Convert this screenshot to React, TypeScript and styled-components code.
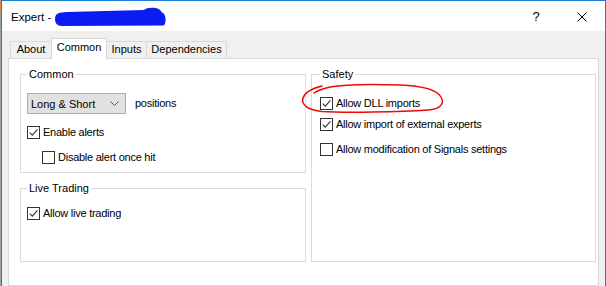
import styled, { createGlobalStyle } from "styled-components";

const tabs = [
  { label: "About", width: 41 },
  { label: "Common", width: 56 },
  { label: "Inputs", width: 40 },
  { label: "Dependencies", width: 80 },
];

const safety = [
  { label: "Allow DLL imports", checked: true, gap: 16 },
  { label: "Allow import of external experts", checked: true, gap: 8 },
  { label: "Allow modification of Signals settings", checked: false, gap: 12 },
];

const GlobalStyle = createGlobalStyle`
  html, body {
    margin: 0;
    padding: 0;
  }
  body {
    background: #d4d4d4;
    font-family: "Liberation Sans", Arial, sans-serif;
    font-size: 11px;
    color: #000;
    overflow: hidden;
  }
`;

function Check(props: { checked: boolean }) {
  return (
    <Box>
      {props.checked && (
        <svg width="11" height="11" viewBox="0 0 11 11">
          <path d="M1.8 5.6 L4.3 8.2 L9.4 2.4" fill="none" stroke="#333" strokeWidth="1.1" />
        </svg>
      )}
    </Box>
  );
}

function CheckItem(props: { label: string; checked: boolean; gap?: number; indent?: number }) {
  return (
    <CheckRow gap={props.gap || 0} indent={props.indent || 0}>
      <Check checked={props.checked} />
      <Label>{props.label}</Label>
    </CheckRow>
  );
}

export default function App() {
  return (
    <Screen>
      <GlobalStyle />
      <Window>
        <TitleBar>
          <Title>Expert -</Title>
          <Scribble width="112" height="20" viewBox="0 0 112 20">
            <path
              d="M0 12 C0 6 4 5.5 12 5 L89 3 C91 1 96 0.2 101 1 C105 2 106 4 107 5.5 C111.5 6.5 111.5 17.5 108.5 18.5 L7 19 C2 19 0 16 0 12 Z"
              fill="#0a1cf2"
            />
          </Scribble>
          <CaptionButton>?</CaptionButton>
          <CloseButton>
            <svg width="10" height="10" viewBox="0 0 10 10">
              <path d="M0.5 0.5 L9.5 9.5 M9.5 0.5 L0.5 9.5" stroke="#000" strokeWidth="1" />
            </svg>
          </CloseButton>
        </TitleBar>
        <Body>
          <TabStrip>
            {tabs.map((tab, index) => (
              <Tab key={index} active={index === 1} first={index === 0} w={tab.width}>
                {tab.label}
              </Tab>
            ))}
          </TabStrip>
          <Panel>
            <Column>
              <Group h={105}>
                <Legend>Common</Legend>
                <SelectRow>
                  <Select>
                    Long &amp; Short
                    <svg width="9" height="5" viewBox="0 0 9 5">
                      <path d="M0.5 0.5 L4.5 4.5 L8.5 0.5" fill="none" stroke="#555" strokeWidth="1" />
                    </svg>
                  </Select>
                  <Label>positions</Label>
                </SelectRow>
                <CheckItem label="Enable alerts" checked={true} gap={12} />
                <CheckItem label="Disable alert once hit" checked={false} gap={12} indent={15} />
              </Group>
              <Group h={80}>
                <Legend>Live Trading</Legend>
                <CheckItem label="Allow live trading" checked={true} gap={12} />
              </Group>
            </Column>
            <Group h={194} pad={8}>
              <Legend>Safety</Legend>
              {safety.map((item, index) => (
                <CheckItem key={index} label={item.label} checked={item.checked} gap={item.gap} />
              ))}
            </Group>
          </Panel>
        </Body>
      </Window>
      <Marker width="146" height="34" viewBox="0 0 146 34">
        <path
          d="M22 4 C14 6 5 10 3 16 C1 23 8 28 22 29.5 C45 31 100 30 128 28 C140 27 145 22 141 15 C137 8 125 4 100 3 C70 2 40 3 28 5.5 C22 7 17 9 14 11"
          fill="none"
          stroke="#ee0a0a"
          strokeWidth="1.5"
          strokeLinecap="round"
        />
      </Marker>
    </Screen>
  );
}

const Screen = styled.div`
  position: relative;
  width: 606px;
  height: 286px;
  padding-left: 1px;
  box-sizing: border-box;
  display: flex;
  overflow: hidden;
  background: linear-gradient(#e3844c 0 11px, #9aa1aa 11px);
`;

const Window = styled.div`
  flex: 1;
  display: flex;
  flex-direction: column;
  border: 1px solid #1a7fd4;
  border-bottom: none;
  background: #f0f0f0;
`;

const TitleBar = styled.div`
  height: 30px;
  display: flex;
  align-items: center;
  padding-left: 9px;
  background: #fff;
`;

const Title = styled.span`
  font-size: 11.5px;
  padding-top: 2px;
`;

const Scribble = styled.svg`
  flex-shrink: 0;
  margin-left: 4px;
  margin-top: 2px;
`;

const CaptionButton = styled.div`
  margin-left: auto;
  width: 46px;
  height: 30px;
  display: flex;
  align-items: center;
  justify-content: center;
  font-size: 13px;
  padding-top: 1px;
  box-sizing: border-box;
`;

const CloseButton = styled.div`
  width: 46px;
  height: 30px;
  display: flex;
  align-items: center;
  justify-content: center;
  padding-top: 1px;
  box-sizing: border-box;
`;

const Body = styled.div`
  flex: 1;
  padding: 7px 6px 0 6px;
  display: flex;
  flex-direction: column;
`;

const TabStrip = styled.div`
  display: flex;
  align-items: flex-end;
  height: 20px;
  padding-left: 2px;
`;

const Tab = styled.div<{ active: boolean; first: boolean; w: number }>`
  position: relative;
  box-sizing: border-box;
  width: ${(props) => props.w}px;
  height: ${(props) => (props.active ? "21px" : "17px")};
  margin-bottom: ${(props) => (props.active ? "-1px" : "0")};
  line-height: ${(props) => (props.active ? "17px" : "15px")};
  text-align: center;
  background: ${(props) => (props.active ? "#fff" : "#f0f0f0")};
  border-top: 1px solid #d9d9d9;
  border-left: ${(props) => (props.active || props.first ? "1px solid #d9d9d9" : "none")};
  border-right: ${(props) => (props.first ? "none" : "1px solid #d9d9d9")};
  z-index: ${(props) => (props.active ? 1 : 0)};
`;

const Panel = styled.div`
  height: 228px;
  box-sizing: border-box;
  border: 1px solid #d9d9d9;
  background: #fff;
  padding: 9px 2px 23px 11px;
  display: grid;
  grid-template-columns: 286px 285px;
  column-gap: 5px;
  align-items: start;
`;

const Column = styled.div`
  display: flex;
  flex-direction: column;
  gap: 9px;
`;

const Group = styled.fieldset<{ h: number; pad?: number }>`
  margin: 0;
  box-sizing: border-box;
  height: ${(props) => props.h}px;
  border: 1px solid #dcdcdc;
  padding: 0 0 0 ${(props) => props.pad || 6}px;
  min-width: 0;
`;

const Legend = styled.legend`
  line-height: 13px;
  padding: 0 2px;
  margin-left: 0;
`;

const SelectRow = styled.div`
  display: flex;
  align-items: center;
  gap: 6px;
  margin-top: 12px;
`;

const Select = styled.div`
  width: 99px;
  height: 21px;
  box-sizing: border-box;
  border: 1px solid #adadad;
  background: #e1e1e1;
  display: flex;
  align-items: center;
  justify-content: space-between;
  padding: 0 6px 0 3px;
`;

const CheckRow = styled.div<{ gap: number; indent: number }>`
  display: flex;
  align-items: center;
  height: 13px;
  margin-top: ${(props) => props.gap}px;
  margin-left: ${(props) => props.indent}px;
`;

const Box = styled.div`
  width: 13px;
  height: 13px;
  box-sizing: border-box;
  border: 1px solid #333;
  background: #fff;
  display: flex;
  align-items: center;
  justify-content: center;
`;

const Label = styled.span`
  margin-left: 3px;
  letter-spacing: -0.25px;
  line-height: 13px;
  white-space: nowrap;
`;

const Marker = styled.svg`
  position: absolute;
  left: 300px;
  top: 82px;
`;
